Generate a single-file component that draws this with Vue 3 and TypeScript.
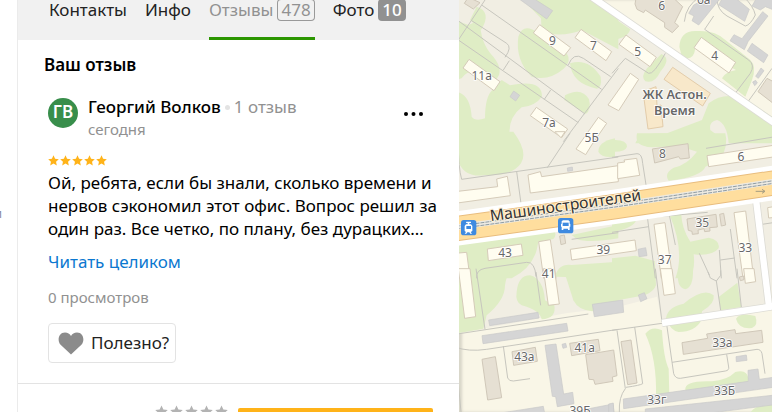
<script setup lang="ts">
interface Shape { d: string; kind: string }
interface Label { x: number; y: number; text: string }
interface Tile { x: number; y: number; greens: string[]; paths: string[]; shapes: Shape[]; labels: Label[] }

const tabs = [
  { title: 'Контакты', count: '', active: false },
  { title: 'Инфо', count: '', active: false },
  { title: 'Отзывы', count: '478', active: true },
  { title: 'Фото', count: '10', active: false },
]

const star = 'M8 .5l2.300 5 5.400.600-4 3.700 1.100 5.400L8 12.500l-4.800 2.700 1.100-5.400-4-3.700 5.400-.600z'

// Map drawn as six tiles; one screen pixel is three map units.
const tiles: Tile[] = [
  {
    x: -12, y: 0,
    greens: [
      'M0 60L40 75 75 60Q75 130 115 170 140 200 132 225L120 245Q50 190 20 235L0 240Z',
      'M65 20Q112 35 78 90L45 60Z',
      'M190 110Q205 65 250 100L335 160Q352 185 325 207 280 245 230 230 180 180 190 110Z',
      'M258 55L200-5H415L490 55V148L380 90Q330 112 260 98Z',
      'M345 190Q400 172 437 230 442 262 425 266 350 250 345 190Z',
      'M330 286Q380 260 402 298 410 330 392 342L328 300Z',
      'M140 240L165 256Q262 235 261 290 240 318 200 322 150 360 168 430H0V275Q45 280 50 350 60 365 90 355 90 290 112 270Z',
    ],
    paths: ['M80 15L440 268', 'M90 0L10 120', 'M50 62L155 130Q172 142 150 172', 'M0 55L390 342', 'M10 120L370 368', 'M163 182L145 210', 'M287 270L268 298', 'M490 205L325 425', 'M340 195Q355 155 385 175L467 230'],
    shapes: [
      { d: 'M40-8L75 8 55 27 28 10Z', kind: 'beige' },
      { d: 'M190-5H235L293 32 275 57Z', kind: 'gray' },
      { d: 'M254 74L347 143 327 168 235 99Z', kind: 'light' },
      { d: 'M378 88L470 155 453 182 360 113Z', kind: 'light' },
      { d: 'M42 178L135 245 117 272 24 204Z', kind: 'light' },
      { d: 'M244 322L338 387 320 413 226 347Z', kind: 'light' },
      { d: 'M430 352L455 370 410 435 392 464 363 447Z', kind: 'light' },
      { d: 'M176 273L194 286 182 303 165 290Z', kind: 'gray' },
    ],
    labels: [{ x: 292, y: 136, text: '9' }, { x: 415, y: 149, text: '7' }, { x: 80, y: 240, text: '11а' }, { x: 282, y: 382, text: '7а' }],
  },
  {
    x: 459, y: 0,
    greens: [
      'M0 50L55 88Q45 118 0 118Z',
      'M148 162Q180 175 145 215 128 252 100 244 85 230 105 205Z',
      'M202 140Q205 90 255 93 310 90 340 120L415 180Q435 200 420 240L400 290 330 235Q340 215 372 210L250 145Q245 185 210 172Z',
      'M290 310Q340 270 410 302L480 350V430H350Q345 370 315 360 290 365 295 390 325 410 328 430H70Q80 395 165 400L270 360Z',
    ],
    paths: ['M0 220L40 175 110 220Q125 225 160 160', 'M217 65Q222 15 265-10', 'M305 48L278 88 410 180Q430 195 415 220L372 277', 'M480 205L408 305', 'M315-5Q315 30 345 48L400 78Q415 75 430 45 425 20 395-10'],
    shapes: [
      { d: 'M72-5L69 12 75 28 95 38 100 30 158 68 158 82 181 98 200 78 188 68 212 20 180-10Z', kind: 'beige' },
      { d: 'M245 15L285-5H325L260 75 240 62 246 48 230 40Z', kind: 'gray' },
      { d: 'M335-10H365L412 28 398 64 320 14Z', kind: 'gray' },
      { d: 'M435-8H490V32L460 20 445 30 420 18Z', kind: 'gray' },
      { d: 'M452 35L468 48 408 125 405 132 397 149 354 122 366 104 390 116Z', kind: 'gray' },
      { d: 'M420 130L468 165 455 188 406 153Z', kind: 'gray' },
      { d: 'M447 204L456 212 439 235 431 229Z', kind: 'gray' },
      { d: 'M422 246L431 241 436 249 428 257Z', kind: 'gray' },
      { d: 'M465 235L490 248V315L438 275Z', kind: 'beige' },
      { d: 'M42 105L133 172 114 200 21 133Z', kind: 'light' },
      { d: 'M268 112L371 187 351 219 246 143Z', kind: 'light' },
      { d: 'M55 220L80 238 20 332-12 315Z', kind: 'light' },
      { d: 'M182 202L295 280 272 318 156 238Z', kind: 'orange' },
      { d: 'M95 288L108 387 153 380 147 315 135 318 132 260 110 268Z', kind: 'orange' },
    ],
    labels: [{ x: 149, y: 30, text: '6' }, { x: 275, y: 13, text: '6а' }, { x: 77, y: 168, text: '5' }, { x: 308, y: 180, text: '4' }],
  },
  {
    x: -12, y: 405,
    greens: [
      'M0-10H175Q220 50 198 85 170 125 90 120 30 130 10 80Z',
      'M430 50Q430 20 480 10V65Q440 70 430 50Z',
      'M0 325L290 282Q310 295 295 312L250 320 245 345Q230 400 170 430H0Z',
      'M350 300L490 270V310Q400 325 365 312Z',
      'M300 425Q310 385 350 390L490 380V430Z',
    ],
    paths: ['M10-10V20Q10 100 20 133L490 66', 'M185 110L200 220', 'M345-5L277 98', 'M350 313L490 293', 'M65 430Q62 405 90 400L215 382Q240 380 243 425'],
    shapes: [
      { d: 'M300-10L318 8 330-10Z', kind: 'light' },
      { d: 'M0 170L128 155 125 132 157 124 166 182 0 205Z', kind: 'light' },
      { d: 'M219 120L256 110 260 125 490 92V140L226 174Z', kind: 'light' },
      { d: 'M97 342L199 327 204 361 100 377Z', kind: 'light' },
      { d: 'M251 320L286 314 303 430H266Z', kind: 'light' },
      { d: 'M346 343L540 315 544 347 350 375Z', kind: 'light' },
      { d: 'M0 355L35 352 45 430H0Z', kind: 'light' },
      { d: 'M314 303L328 300 332 325 318 329Z', kind: 'beige' },
      { d: 'M337 99L352 96 353 107 338 109Z', kind: 'gray' },
    ],
    labels: [{ x: 410, y: 20, text: '5Б' }, { x: 150, y: 365, text: '43' }, { x: 445, y: 357, text: '39' }],
  },
  {
    x: 459, y: 405,
    greens: [
      'M0 15Q45 12 45 35 40 52 0 50Z',
      'M75-5H340Q350 30 325 75L280 95Q270 125 170 137 155 115 185 98 225 90 255 50 200 30 120 37 65 35 75-5Z',
      'M0 260L75 248Q70 280 0 290Z',
      'M172 237L207 232Q210 285 235 320L290 308Q325 315 320 340 300 365 245 358 250 400 235 430H190Q220 350 172 237Z',
      'M0 370L70 362Q100 370 128 378L132 430H0Z',
    ],
    paths: ['M0 67L75 56Q90 55 92 85L104 162', 'M104 230L130 430', 'M0 292L110 275', 'M172 240L190 330', 'M104 248L287 232', 'M282 40L490 5', 'M355 282L375 430', 'M322 345L328 430', 'M262 355L292 420', 'M325 375L368 369', 'M450 268L490 262'],
    shapes: [
      { d: 'M17 84L38 81 36 75 74 70 83 121 17 131Z', kind: 'light' },
      { d: 'M121 42L228 26 232 69 205 72 200 65 128 84Z', kind: 'beige' },
      { d: 'M285 62L490 30V65L290 95Z', kind: 'light' },
      { d: 'M126 268L159 263 182 430H148Z', kind: 'light' },
      { d: 'M366 233L401 228 425 430H393Z', kind: 'light' },
      { d: 'M467 218L490 214V247L470 249Z', kind: 'light' },
      { d: 'M225 252L312 238 316 276 293 278 294 288 278 290 276 281 258 285 259 296 241 298 240 289 229 286Z', kind: 'beige' },
      { d: 'M323 238L335 235 341 270 328 273Z', kind: 'beige' },
      { d: 'M78 343L101 338 105 362 81 365Z', kind: 'gray' },
    ],
    labels: [{ x: 151, y: 68, text: '8' }, { x: 387, y: 77, text: '6' }, { x: 271, y: 277, text: '35' }, { x: 400, y: 350, text: '33' }, { x: 158, y: 386, text: '37' }],
  },
  {
    x: -12, y: 816,
    greens: [
      'M0-10H170Q155 5 150 40 150 85 95 130L85 170 0 185Z',
      'M185 60Q190 10 225 10 265 20 270 85L298 100Q305 140 260 142 255 115 200 100 180 90 185 60Z',
      'M325-10H490V98L412 118Q370 115 355 85Z',
    ],
    paths: ['M63-10L90 172', 'M243 0L257 100', 'M0 187L400 126', 'M0 225Q40 240 95 232L490 172', 'M145 222L158 318Q162 328 175 327L225 320', 'M0 225L18 420'],
    shapes: [
      { d: 'M10-10H45L62 134 29 139Z', kind: 'light' },
      { d: 'M265-10H298L313 96 280 100Z', kind: 'light' },
      { d: 'M101 144L249 121 252 138 104 161Z', kind: 'gray' },
      { d: 'M81 191L335 154 339 177 84 215Z', kind: 'gray' },
      { d: 'M412 97L503 84 506 121 418 134Z', kind: 'gray' },
      { d: 'M270 220L303 216 326 366 353 361 357 395 307 404 302 374 292 373Z', kind: 'gray' },
      { d: 'M81 262L121 254 140 377 98 384Z', kind: 'beige' },
      { d: 'M171 239L241 226 247 268 176 280Z', kind: 'beige' },
      { d: 'M344 214L430 202 435 236 350 251Z', kind: 'beige' },
      { d: 'M392 248L476 234 486 311 472 315 474 328 420 337 416 323 402 322Z', kind: 'beige' },
      { d: 'M125 425L265 403 270 430H125Z', kind: 'gray' },
      { d: 'M350 420L474 396 478 430H350Z', kind: 'gray' },
      { d: 'M321 217L332 214 335 226 324 229Z', kind: 'gray' },
    ],
    labels: [{ x: 281, y: 19, text: '41' }, { x: 208, y: 266, text: '43а' }, { x: 389, y: 241, text: '41а' }, { x: 375, y: 428, text: '39Б' }],
  },
  {
    x: 459, y: 816,
    greens: [
      'M0-10H130L132 40Q120 70 70 75L0 88Z',
      'M200-10H243Q245 45 220 52 190 45 200-10Z',
      'M162 140Q165 105 215 95 275 45 305 70 310 95 270 118L268 145Q250 180 200 180 175 175 162 140Z',
      'M320 75L376 32 388 105 326 115Z',
      'M372 140Q385 120 430 132 440 160 420 168 380 172 372 140Z',
      'M100 185Q120 160 150 175 155 260 170 290L172 370 132 375Q135 260 100 185Z',
      'M220 355Q215 325 300 328 345 325 370 300 405 290 410 320L405 335Z',
      'M412 430Q420 400 480 395V430Z',
    ],
    paths: ['M130-10L150 150', 'M0 175L150 154', 'M15 175L40 350Q20 375 22 420', 'M68 165L92 335Q85 340 42 346', 'M163 150L185 305Q190 320 205 319L340 297Q352 295 350 285L344 247', 'M180 271L435 232Q447 232 450 245L459 305', 'M288 0L295 18 313 27 326 10V-5', 'M313 27L326 115', 'M375-10L388 105'],
    shapes: [
      { d: 'M145-10H180L190 65 156 70Z', kind: 'light' },
      { d: 'M395-10H426L431 29 400 34Z', kind: 'light' },
      { d: 'M382 15L395 12 396 23 385 26Z', kind: 'beige' },
      { d: 'M79 69L97 62 105 80 86 89Z', kind: 'gray' },
      { d: 'M27 209L57 204 75 333 47 338Z', kind: 'beige' },
      { d: 'M210 212L287 199 284 186 369 173 371 185 449 175 453 211 214 247Z', kind: 'beige' },
      { d: 'M372 254L403 249 405 265 373 269Z', kind: 'gray' },
      { d: 'M34 381L409 328 408 295 438 291 442 322 490 315V345L35 410Z', kind: 'gray' },
      { d: 'M-10 396L4 393 6 430H-10Z', kind: 'gray' },
      { d: 'M100 411L490 369V398L240 430H100Z', kind: 'gray' },
    ],
    labels: [{ x: 331, y: 225, text: '33а' }, { x: 338, y: 368, text: '33Б' }, { x: 134, y: 396, text: '33г' }],
  },
]
</script>

<template>
  <div class="page">
    <aside class="gutter"><span>и</span></aside>
    <main class="panel">
      <nav class="tabs">
        <a v-for="tab in tabs" :key="tab.title" href="#" class="tab" :class="{ active: tab.active }">
          {{ tab.title }}<span v-if="tab.count" class="count">{{ tab.count }}</span>
        </a>
      </nav>
      <section class="own">
        <h2>Ваш отзыв</h2>
        <article class="review">
          <header class="author">
            <span class="avatar">ГВ</span>
            <div class="who">
              <div class="line"><a href="#" class="name">Георгий Волков</a><i class="dot"></i><span>1 отзыв</span></div>
              <time>сегодня</time>
            </div>
            <button class="more" type="button" aria-label="Ещё">
              <svg width="20" height="4" viewBox="0 0 20 4"><circle cx="2" cy="2" r="2" /><circle cx="9.500" cy="2" r="2" /><circle cx="17" cy="2" r="2" /></svg>
            </button>
          </header>
          <div class="stars">
            <svg v-for="n in 5" :key="n" viewBox="0 0 16 16"><path :d="star" /></svg>
          </div>
          <p class="text">Ой, ребята, если бы знали, сколько времени и нервов сэкономил этот офис. Вопрос решил за один раз. Все четко, по плану, без дурацких…</p>
          <a href="#" class="full">Читать целиком</a>
          <div class="views">0 просмотров</div>
          <button class="useful" type="button">
            <svg width="26" height="23" viewBox="0 0 26 23"><path d="M13 22.500L2.600 12.700C-1 9 .3.500 7 .500c2.700 0 4.900 1.500 6 3.500C14.100 2 16.300.500 19 .500c6.700 0 8 8.500 4.400 12.200z" /></svg>
            Полезно?
          </button>
        </article>
      </section>
      <section class="rating">
        <div class="stars big">
          <svg v-for="n in 5" :key="n" viewBox="0 0 16 16"><path :d="star" /></svg>
        </div>
        <div class="bar"></div>
      </section>
    </main>
    <div class="map">
      <svg class="canvas" viewBox="0 0 939 1236" preserveAspectRatio="xMinYMin slice">
        <path class="quarter" d="M0 0H398L939 365V916L609 966 594 890 480 920 320 940 0 1000Z" />
        <g v-for="(t, i) in tiles" :key="'g' + i" :transform="`translate(${t.x} ${t.y})`">
          <path v-for="d in t.greens" :key="d" class="green" :d="d" />
        </g>
        <g v-for="(t, i) in tiles" :key="'p' + i" :transform="`translate(${t.x} ${t.y})`">
          <path v-for="d in t.paths" :key="d" class="path" :d="d" />
        </g>
        <path class="casing" d="M390-15L950 372M890 590L930 918M609 969L950 918" />
        <path class="street" d="M390-15L950 372M890 590L930 918M609 969L950 918" />
        <path class="verge" d="M-10 686L468 620 950 548" />
        <path class="edge" d="M-10 686L468 620 950 548" />
        <path class="highway" d="M-10 686L468 620 950 548" />
        <path class="middle" d="M-10 682L468 616 950 544" />
        <path class="rail" d="M-10 679L468 613 950 541M-10 687L468 621 950 549" />
        <path class="arrow" d="M890 574h27m-8-6l9 6-9 6" />
        <g v-for="(t, i) in tiles" :key="'s' + i" :transform="`translate(${t.x} ${t.y})`">
          <path v-for="s in t.shapes" :key="s.d" :class="s.kind" :d="s.d" />
        </g>
        <g v-for="(t, i) in tiles" :key="'l' + i" :transform="`translate(${t.x} ${t.y})`">
          <text v-for="l in t.labels" :key="l.text" class="label" :x="l.x" :y="l.y">{{ l.text }}</text>
        </g>
        <text class="label place" x="647" y="298">ЖК Астон.</text>
        <text class="label place" x="647" y="346">Время</text>
        <text class="road-name" transform="translate(95 664) rotate(-8)">Машиностроителей</text>
        <g transform="translate(6 660)">
          <rect class="stop" width="46" height="46" rx="8" />
          <path class="glyph" d="M16 5h14v4h-5v4h5l4 5v15l-5 3 4 5h-5l-3-4h-6l-3 4h-5l4-5-4-3V18l4-5h5V9h-5z" />
          <path class="pane" d="M16 18h14v9H16z" />
        </g>
        <g transform="translate(297 654)">
          <rect class="stop" width="46" height="46" rx="8" />
          <path class="glyph" d="M11 10l4-3h16l4 3v7l2 1v8h-2v10h-5v-4H16v4h-5V26H9v-8l2-1z" />
          <path class="pane" d="M14 14h18v10H14z" />
        </g>
      </svg>
    </div>
  </div>
</template>

<style>
body { overflow: hidden; }
</style>

<style scoped>
* { box-sizing: border-box; }
.page {
  display: grid;
  grid-template-columns: 17px 442px minmax(0, 1fr);
  grid-template-rows: minmax(0, 1fr);
  height: 100vh;
  overflow: hidden;
  background: #fff;
  font-family: "Noto Sans", "Open Sans", sans-serif;
  font-size: 17px;
  line-height: 23px;
  color: #000;
}
a { color: inherit; text-decoration: none; }
button { font: inherit; background: none; border: 0; padding: 0; cursor: pointer; }
.gutter { overflow: hidden; padding-top: 202px; font-size: 13px; color: #8c8ca0; }
.gutter span { display: block; text-indent: -6px; }
.panel { border-left: 1px solid #ebebeb; min-width: 0; }
.tabs { display: flex; gap: 18px; height: 40px; padding-left: 31px; background: #f1f1f1; color: #222; }
.tab { display: flex; align-items: flex-start; gap: 4px; white-space: nowrap; line-height: 20px; height: 40px; }
.tab.active { color: #919191; border-bottom: 3px solid #2c9600; }
.count { height: 22px; margin-top: -1px; padding: 0 4px; border-radius: 4px; line-height: 22px; background: #919191; color: #fff; font-weight: 500; }
.active .count { background: none; box-shadow: inset 0 0 0 1px #999; color: #919191; font-weight: 400; }
.own { padding: 13px 18px 20px 26px; border-bottom: 1px solid #e3e3e3; }
h2 { margin: 0; font-size: 17px; line-height: 24px; font-weight: 600; }
.review { padding: 18px 0 0 4px; }
.author { display: flex; }
.avatar { width: 30px; height: 30px; margin: 3px 10px 0 0; border-radius: 50%; background: #388e4b; color: #fff; font-weight: 600; line-height: 28px; text-align: center; }
.who { flex: 1; color: #919191; }
.line { display: flex; align-items: center; white-space: nowrap; line-height: 24px; }
.name { color: #000; font-weight: 500; }
.dot { width: 5px; height: 5px; margin: 0 4px; border-radius: 50%; background: #e3e3e3; }
time { display: block; font-size: 15px; line-height: 20px; }
.more { align-self: flex-start; display: flex; width: 20px; margin: 17px 17px 0 0; }
.stars { display: flex; gap: 1px; margin-top: 16px; }
.stars svg { width: 11px; height: 11px; fill: #ffb319; }
.text { margin: 5px 0 10px; }
.full { display: block; color: #0b78d0; }
.views { margin-top: 14px; color: #919191; font-size: 15px; line-height: 20px; }
.useful { display: flex; align-items: center; gap: 7px; height: 40px; margin-top: 16px; padding: 0 6px 2px 9px; border: 1px solid #e3e3e3; border-radius: 4px; color: #222; }
.useful svg { fill: #8b8b8b; margin-top: 2px; }
.rating { display: flex; gap: 10px; align-items: flex-start; padding: 21px 26px 0 137px; }
.big { gap: 2px; margin: 0; }
.big svg { width: 13px; height: 13px; fill: #b3b3b3; }
.bar { flex: 1; height: 10px; margin-top: 3px; border-radius: 2px; background: #ffb319; }
.map { min-width: 0; overflow: hidden; background: #f9f6e7; box-shadow: inset 3px 0 3px #0002; font-family: "Noto Sans", sans-serif; }
.canvas { display: block; width: 100%; height: 100%; }
.quarter { fill: #f1eee3; }
.green { fill: #dfedc5; }
.path { fill: none; stroke: #c7c6be; stroke-width: 3; }
.casing { fill: none; stroke: #dddcd5; stroke-width: 24; }
.street { fill: none; stroke: #fff; stroke-width: 19; }
.verge { fill: none; stroke: #fff; stroke-width: 103; }
.edge { fill: none; stroke: #e9bd7e; stroke-width: 76; }
.highway { fill: none; stroke: #ffde9e; stroke-width: 70; }
.middle { fill: none; stroke: #edeae2; stroke-width: 17; }
.rail { fill: none; stroke: #909da4; stroke-width: 3; stroke-dasharray: 12 3; }
.arrow { fill: none; stroke: #a49c80; stroke-width: 3; }
.light { fill: #fffdf0; stroke: #d5cbb9; stroke-width: 3; }
.beige { fill: #e6e0d3; stroke: #d0c8b9; stroke-width: 3; }
.gray { fill: #d5d5d5; stroke: #c9c9c9; stroke-width: 2; }
.orange { fill: #f8e8ca; stroke: #e3ccaa; stroke-width: 3; }
.label { font-size: 36px; text-anchor: middle; fill: #686868; stroke: #fff; stroke-width: 5; paint-order: stroke; }
.place { font-size: 38px; font-weight: 600; }
.road-name { font-size: 47px; fill: #333; stroke: #fff2d8; stroke-width: 6; paint-order: stroke; }
.stop { fill: #3f8ae0; }
.glyph { fill: #fff; }
.pane { fill: #3f8ae0; }
</style>
